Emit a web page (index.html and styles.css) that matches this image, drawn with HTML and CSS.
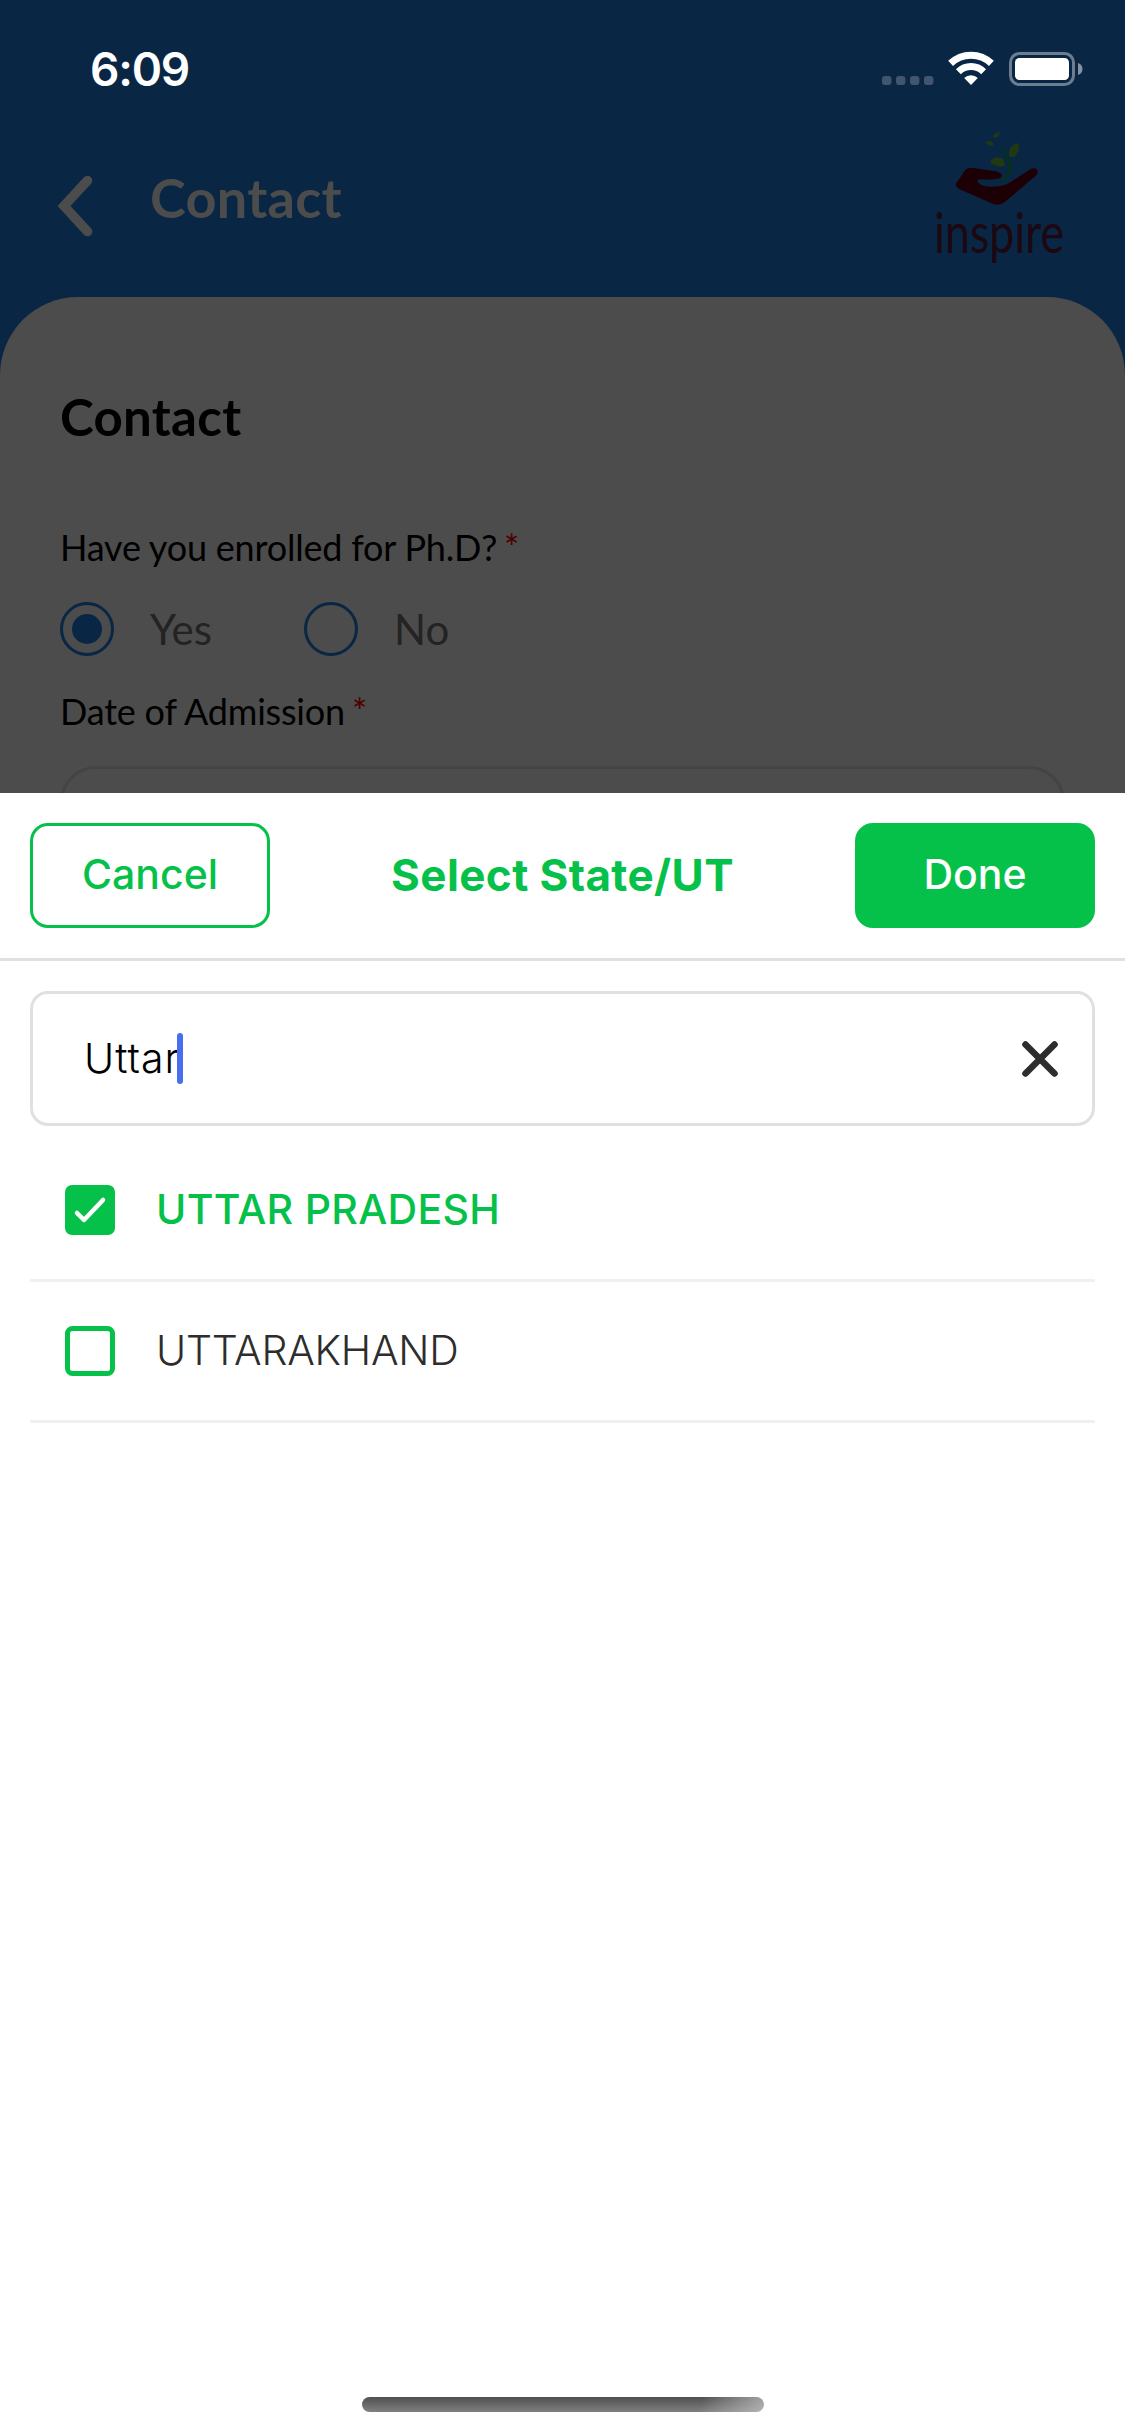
FILE: index.html
```html
<!DOCTYPE html>
<html lang="en">
<head>
<meta charset="utf-8">
<title>Contact</title>
<link rel="stylesheet" href="styles.css">
</head>
<body>
<div class="phone">
  <div class="screen">
    <div class="status">
      <span class="time">6:09</span>
      <svg class="status-icons" width="202" height="36" viewBox="0 0 202 36">
        <g fill="#41566e">
          <rect x="1" y="25" width="9.4" height="9" rx="3"/>
          <rect x="15" y="25" width="9.4" height="9" rx="3"/>
          <rect x="29" y="25" width="9.4" height="9" rx="3"/>
          <rect x="43" y="25" width="9.4" height="9" rx="3"/>
        </g>
        <g fill="none" stroke="#fff" stroke-width="7">
          <path d="M69.6 12.4A29.5 29.5 0 0 1 110.4 12.4"/>
          <path d="M77.4 20.7A18 18 0 0 1 102.6 20.7"/>
        </g>
        <path d="M90 34l-6.8-7a9.8 9.8 0 0 1 13.6 0z" fill="#fff"/>
        <rect x="129.5" y="2.500" width="63" height="31" rx="9" fill="none" stroke="#6b7d8f" stroke-width="3"/>
        <rect x="134" y="7" width="54" height="22" rx="4.500" fill="#fff"/>
        <path d="M197 12q4.500 1.500 4.500 6t-4.500 6z" fill="#8493a2"/>
      </svg>
    </div>
    <header class="header">
      <svg class="back" width="38" height="62" viewBox="0 0 38 62">
        <path d="M31.500 5.500L8 31L31.500 56.500" fill="none" stroke="#4c4c4c" stroke-width="9.500" stroke-linecap="round"/>
      </svg>
      <h1 class="title">Contact</h1>
      <svg class="logo" width="130" height="138" viewBox="0 0 130 138">
        <path d="M20 46q-1-2 1-4l7-10q3-5 9-4l21 3q8 1 8 5q-1 3-9 3.500h-13q-4 0-2 3q4 5 17 4q8 0 15-4l20-13q4-2.500 7 0q2 3-1 6L69 62q-7 5-14 1L23 49z" fill="#1c0005"/>
        <path d="M59 2Q76 16 76 28Q74 42 54 46Q70 41 72 28Q71 15 59 2z" fill="#05301e"/>
        <g fill="#20390f">
          <path d="M54 22q5-7 13-3l2 6q-8 4-15-3z"/>
          <path d="M74 17q-4-10 8-14q3 8-4 14z"/>
          <path d="M50 2q4-3 8 2l-2 2q-4 0-6-4z"/>
          <path d="M57-3q1-4 7-5q-1 5-5 6z"/>
        </g>
        <text class="logo-text" x="-2" y="113" textLength="130" lengthAdjust="spacingAndGlyphs">inspire</text>
      </svg>
    </header>
    <main class="card">
      <h2 class="heading">Contact</h2>
      <div class="label">Have you enrolled for Ph.D? <span class="star">*</span></div>
      <div class="radios">
        <span class="radio radio-on"></span><span class="option option-yes">Yes</span>
        <span class="radio"></span><span class="option">No</span>
      </div>
      <div class="label">Date of Admission <span class="star">*</span></div>
      <div class="date-clip"><div class="date-field"></div></div>
    </main>
  </div>
  <section class="sheet">
    <div class="sheet-bar">
      <div class="btn btn-cancel">Cancel</div>
      <div class="sheet-title">Select State/UT</div>
      <div class="btn btn-done">Done</div>
    </div>
    <div class="sheet-body">
      <div class="search">
        <span class="query">Uttar</span><span class="caret"></span>
        <svg class="clear" width="36" height="36" viewBox="0 0 36 36">
          <path d="M3.500 3.500L32.500 32.500M32.500 3.500L3.500 32.500" stroke="#2d2d2d" stroke-width="6.600" stroke-linecap="round"/>
        </svg>
      </div>
      <div class="row">
        <svg class="box" width="50" height="50" viewBox="0 0 50 50">
          <rect width="50" height="50" rx="7" fill="#06c149"/>
          <path d="M12 28L19 35L38 15" fill="none" stroke="#fff" stroke-width="4.500" stroke-linecap="round" stroke-linejoin="round"/>
        </svg>
        <span class="name name-on">UTTAR PRADESH</span>
      </div>
      <div class="row">
        <svg class="box" width="50" height="50" viewBox="0 0 50 50">
          <rect x="2.500" y="2.500" width="45" height="45" rx="5" fill="none" stroke="#06c149" stroke-width="5"/>
        </svg>
        <span class="name name-off">UTTARAKHAND</span>
      </div>
    </div>
    <div class="home"></div>
  </section>
</div>
</body>
</html>
```
FILE: styles.css
```css
* { box-sizing: border-box; }
body { margin: 0; background: #fff; }
.phone {
  width: 1125px;
  height: 2436px;
  display: flex;
  flex-direction: column;
  overflow: hidden;
  font-family: Inter, "Liberation Sans", sans-serif;
}
.screen {
  height: 793px;
  background: #092745;
  display: flex;
  flex-direction: column;
  font-family: Lato, "Liberation Sans", sans-serif;
}
.status {
  height: 127px;
  padding: 51px 42px 0 90px;
  display: flex;
  justify-content: space-between;
  align-items: flex-start;
}
.time {
  font: 600 46px/36px Inter, sans-serif;
  letter-spacing: -1.2px;
  color: #fff;
}
.header {
  height: 170px;
  padding-left: 56px;
  display: flex;
  align-items: flex-start;
}
.back { margin-top: 48px; }
.title {
  margin: 41px 0 0 56px;
  font-size: 54px;
  line-height: 60px;
  font-weight: 700;
  letter-spacing: .3px;
  color: #4c4c4c;
}
.logo { margin: 13px 59px 0 auto; overflow: visible; }
.logo-text { font-family: Lato, sans-serif; font-size: 57px; fill: #1d0710; }
.card {
  flex: 1;
  padding: 90px 60px 0;
  background: #4c4c4c;
  border-radius: 78px 78px 0 0;
}
.heading {
  margin: 0 0 78px;
  font-size: 51px;
  line-height: 60px;
  letter-spacing: .3px;
  color: #000;
}
.label { font-size: 36px; line-height: 44px; letter-spacing: -.2px; color: #000; }
.star { margin-left: -2px; color: #4c0000; }
.radios {
  display: flex;
  align-items: center;
  height: 54px;
  margin: 33px 0;
}
.radio {
  width: 54px;
  height: 54px;
  padding: 9px;
  border: 3px solid #092745;
  border-radius: 50%;
}
.radio-on::before {
  content: "";
  display: block;
  width: 30px;
  height: 30px;
  border-radius: 50%;
  background: #092745;
}
.option { margin-left: 36px; font-size: 42px; line-height: 52px; padding-bottom: 1px; color: #232323; }
.option-yes { width: 154px; }
.date-clip { height: 27px; margin-top: 33px; overflow: hidden; }
.date-field { height: 150px; border: 3px solid #444; border-radius: 36px; }
.sheet { flex: 1; display: flex; flex-direction: column; background: #fff; }
.sheet-bar {
  height: 168px;
  padding: 30px;
  display: flex;
  justify-content: space-between;
  border-bottom: 3px solid #e0e0e0;
}
.btn {
  width: 240px;
  height: 105px;
  border: 3px solid #06c149;
  border-radius: 18px;
  display: flex;
  justify-content: center;
  font-size: 41px;
  line-height: 96px;
  font-weight: 450;
}
.btn-cancel { color: #06c149; }
.btn-done { background: #06c149; color: #fff; }
.sheet-title { font-size: 44px; line-height: 105px; font-weight: 700; letter-spacing: .4px; color: #06c149; }
.sheet-body { flex: 1; padding: 30px 30px 0; }
.search {
  height: 135px;
  padding: 0 34px 0 51px;
  margin-bottom: 15px;
  border: 3px solid #e0e0e0;
  border-radius: 18px;
  display: flex;
  align-items: center;
}
.query { padding-bottom: 1px; font-size: 41px; font-weight: 300; letter-spacing: 1px; color: #000; }
.caret { width: 6px; height: 51px; margin-left: -3px; border-radius: 3px; background: #466eef; }
.clear { margin-left: auto; }
.row {
  height: 141px;
  padding-left: 35px;
  display: flex;
  align-items: center;
  border-bottom: 3px solid #f0f0f0;
}
.name { margin-left: 41px; padding-bottom: 2px; font-size: 41px; line-height: 60px; }
.name-on { color: #06c149; font-weight: 500; letter-spacing: .3px; }
.name-off { color: #2d2d2d; font-weight: 300; letter-spacing: -.25px; }
.home {
  width: 402px;
  height: 15px;
  margin: 0 auto 24px 362px;
  border-radius: 8px;
  background: linear-gradient(100deg, transparent 84%, rgba(200, 200, 200, .7)), linear-gradient(#505050, #808080);
}
```
